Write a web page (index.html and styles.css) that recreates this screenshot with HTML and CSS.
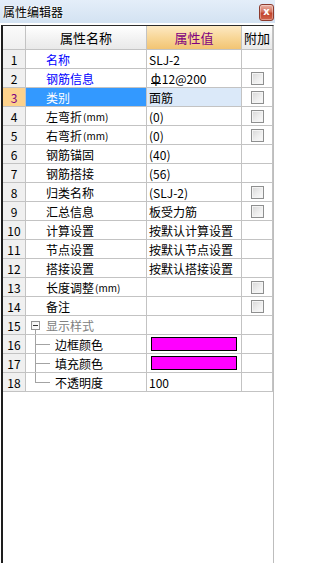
FILE: index.html
```html
<!DOCTYPE html>
<html>
<head>
<meta charset="utf-8">
<link rel="stylesheet" href="styles.css">
</head>
<body>
<div class="window">
  <div class="titlebar">
    <span class="title">属性编辑器</span>
    <span class="close">x</span>
  </div>
  <div class="frame">
    <div class="table">
      <div class="row head">
        <div class="num"></div>
        <div class="hname">属性名称</div>
        <div class="hval">属性值</div>
        <div class="hadd">附加</div>
      </div>
      <div class="row"><div class="num">1</div><div class="name blue">名称</div><div class="val">SLJ-2</div><div class="add"></div></div>
      <div class="row"><div class="num">2</div><div class="name blue">钢筋信息</div><div class="val"><span class="rebar">ф</span>12@200</div><div class="add"><span class="chk"></span></div></div>
      <div class="row sel"><div class="num">3</div><div class="name">类别</div><div class="val">面筋</div><div class="add"><span class="chk"></span></div></div>
      <div class="row"><div class="num">4</div><div class="name">左弯折<span class="mm">(mm)</span></div><div class="val">(0)</div><div class="add"><span class="chk"></span></div></div>
      <div class="row"><div class="num">5</div><div class="name">右弯折<span class="mm">(mm)</span></div><div class="val">(0)</div><div class="add"><span class="chk"></span></div></div>
      <div class="row"><div class="num">6</div><div class="name">钢筋锚固</div><div class="val">(40)</div><div class="add"></div></div>
      <div class="row"><div class="num">7</div><div class="name">钢筋搭接</div><div class="val">(56)</div><div class="add"></div></div>
      <div class="row"><div class="num">8</div><div class="name">归类名称</div><div class="val">(SLJ-2)</div><div class="add"><span class="chk"></span></div></div>
      <div class="row"><div class="num">9</div><div class="name">汇总信息</div><div class="val">板受力筋</div><div class="add"><span class="chk"></span></div></div>
      <div class="row"><div class="num">10</div><div class="name">计算设置</div><div class="val">按默认计算设置</div><div class="add"></div></div>
      <div class="row"><div class="num">11</div><div class="name">节点设置</div><div class="val">按默认节点设置</div><div class="add"></div></div>
      <div class="row"><div class="num">12</div><div class="name">搭接设置</div><div class="val">按默认搭接设置</div><div class="add"></div></div>
      <div class="row"><div class="num">13</div><div class="name">长度调整<span class="mm">(mm)</span></div><div class="val"></div><div class="add"><span class="chk"></span></div></div>
      <div class="row"><div class="num">14</div><div class="name">备注</div><div class="val"></div><div class="add"><span class="chk"></span></div></div>
      <div class="row"><div class="num">15</div><div class="name group"><span class="toggle"><span class="minus"></span></span><span class="gtext">显示样式</span></div><div class="val"></div><div class="add"></div></div>
      <div class="row"><div class="num">16</div><div class="name child"><span class="tree mid"></span><span>边框颜色</span></div><div class="val"><span class="swatch"></span></div><div class="add"></div></div>
      <div class="row"><div class="num">17</div><div class="name child"><span class="tree mid"></span><span>填充颜色</span></div><div class="val"><span class="swatch"></span></div><div class="add"></div></div>
      <div class="row"><div class="num">18</div><div class="name child"><span class="tree last"></span><span>不透明度</span></div><div class="val">100</div><div class="add"></div></div>
    </div>
  </div>
</div>
</body>
</html>
```

FILE: styles.css
```css
* { box-sizing: border-box; }
html, body {
  margin: 0;
  padding: 0;
  background: #ffffff;
}
body {
  width: 275px;
  height: 563px;
  overflow: hidden;
  font-family: "Noto Sans CJK SC", "Noto Sans", sans-serif;
  font-size: 12px;
  color: #000;
}
.window {
  display: flex;
  flex-direction: column;
  height: 563px;
}
.titlebar {
  height: 23px;
  display: flex;
  align-items: center;
  justify-content: space-between;
  background: linear-gradient(#e4eef9, #d3e2f2);
  padding-left: 3px;
  padding-right: 1px;
  flex-shrink: 0;
}
.title {
  font-size: 12px;
  line-height: 14px;
  color: #000;
  text-shadow: 0 0 3px #fff, 0 0 2px #fff;
}
.close {
  width: 15px;
  height: 17px;
  margin-top: 2px;
  border: 1px solid #8c3b2e;
  border-radius: 3px;
  background: linear-gradient(#eab3a5, #d4715e 45%, #c2432c 55%, #d0644c);
  color: #fff;
  font-family: "DejaVu Sans", sans-serif;
  font-weight: bold;
  font-size: 10px;
  line-height: 14px;
  text-align: center;
  box-shadow: inset 0 0 0 1px rgba(255,255,255,0.35);
}
.frame {
  flex: 1;
  margin-top: 2px;
  margin-left: 1px;
  width: 273px;
  border-left: 2px solid #1e1e1e;
  border-top: 1px solid #2c2c2c;
  border-right: 1px solid #bdbdbd;
  background: #fff;
}
.table {
  display: flex;
  flex-direction: column;
  gap: 1px;
  background: #c3c3c3;
  padding-bottom: 1px;
}
.row {
  display: grid;
  grid-template-columns: 22px 120px 94px 30px;
  column-gap: 1px;
  height: 18px;
}
.row.head {
  height: 23px;
}
.row > div {
  background: #fff;
  display: flex;
  align-items: center;
  white-space: nowrap;
  overflow: hidden;
}
.row .num {
  background: #f0f0f0;
  justify-content: center;
  font-size: 12px;
}
.head > div {
  justify-content: center;
  font-size: 13px;
  background: linear-gradient(#ffffff, #f1f1f1 60%, #e9e9e9);
}
.head > .num {
  background: linear-gradient(#fbfbfb, #efefef);
}
.head > .hval {
  background: linear-gradient(#fde9c4, #f8d798 50%, #f2c473);
  color: #800080;
}
.name {
  padding-left: 20px;
}
.name.blue { color: #0000ff; }
.mm {
  font-size: 10px;
  margin-left: 1px;
}
.val {
  padding-left: 2px;
}
.rebar {
  display: inline-block;
  margin-left: 2px;
  margin-right: 1px;
  line-height: 11px;
  border-bottom: 1px solid #000;
}
.add {
  justify-content: center;
}
.chk {
  display: block;
  width: 13px;
  height: 13px;
  margin-left: 1px;
  border: 1px solid #8e8f8f;
  background: linear-gradient(135deg, #d6d6d6, #eeeeee 55%, #fbfbfb);
  box-shadow: inset 0 0 0 1px #f4f4f4;
}
.row.sel .num {
  background: #fdd28c;
  color: #800080;
}
.row.sel .name {
  background: #3399ff;
  color: #fff;
}
.row.sel .val {
  background: #dbe9f9;
}
.group {
  padding-left: 5px;
  background: #fff linear-gradient(#a3a3a3, #a3a3a3) 9px 14px / 1px 5px no-repeat !important;
}
.toggle {
  width: 9px;
  height: 9px;
  border: 1px solid #949494;
  background: linear-gradient(135deg, #f2f2f2, #ffffff);
  display: flex;
  align-items: center;
  justify-content: center;
  margin-right: 6px;
}
.minus {
  width: 5px;
  height: 1px;
  background: #333;
}
.gtext {
  color: #808080;
}
.child {
  padding-left: 9px;
  align-items: stretch !important;
}
.child > span:last-child {
  display: flex;
  align-items: center;
  padding-left: 5px;
}
.tree {
  width: 15px;
  flex-shrink: 0;
}
.tree.mid {
  background:
    linear-gradient(#a3a3a3, #a3a3a3) 0 0 / 1px 100% no-repeat,
    linear-gradient(#a3a3a3, #a3a3a3) 0 9px / 100% 1px no-repeat;
}
.tree.last {
  background:
    linear-gradient(#a3a3a3, #a3a3a3) 0 0 / 1px 10px no-repeat,
    linear-gradient(#a3a3a3, #a3a3a3) 0 9px / 100% 1px no-repeat;
}
.swatch {
  display: block;
  width: 86px;
  height: 14px;
  margin-left: 2px;
  background: #ff00ff;
  border: 1px solid #000;
}
```
